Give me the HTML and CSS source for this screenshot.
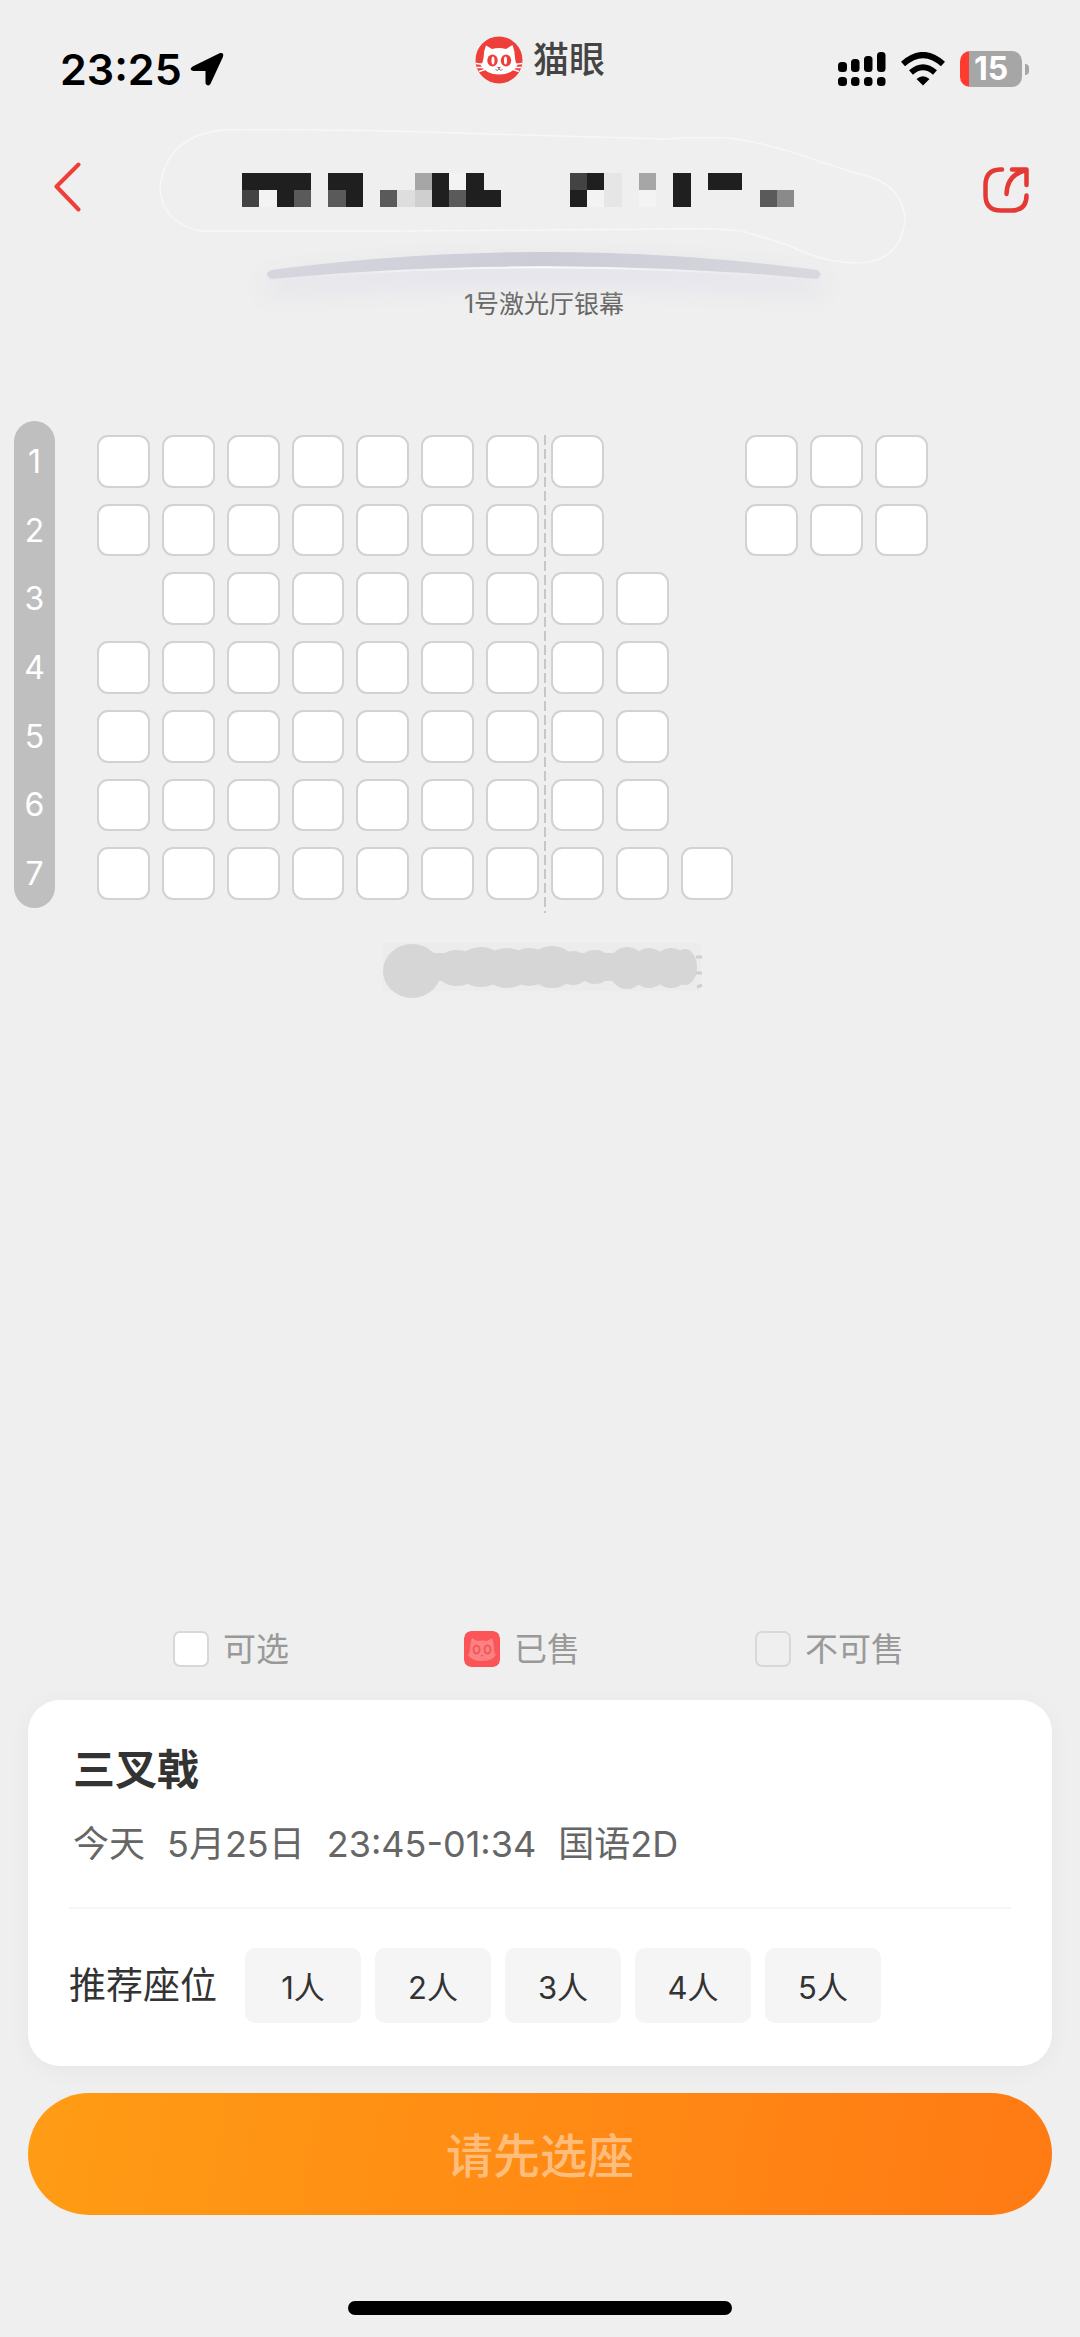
FILE: index.html
```html
<!DOCTYPE html>
<html lang="zh-CN">
<head>
<meta charset="utf-8">
<meta name="viewport" content="width=device-width, initial-scale=1">
<title>选座</title>
<link rel="stylesheet" href="styles.css">
</head>
<body>
<div class="status">
  <div class="status-left">
    <span class="time">23:25</span>
    <svg class="locate" width="34" height="34" viewBox="0 0 34 34" aria-hidden="true"><path d="M3 15.500 30.500 2Q33 1.500 32 4.500L19.500 31.500Q17.500 33.500 16.500 31V18H3.500Q0 17.500 3 15.500Z" fill="#000" stroke="#000" stroke-width="2" stroke-linejoin="round"/></svg>
  </div>
  <div class="brand">
    <svg width="48" height="48" viewBox="0 0 48 48" aria-hidden="true">
      <circle cx="24" cy="24" r="23.500" fill="#ef3f3a"/>
      <path d="M11 9.500 17 13Q24 11 31 13L37.500 9Q40 15 40 22Q40 26 42.500 29Q37 38.500 24 38.500Q11 38.500 5.500 29Q8.500 26 8.500 22Q8.500 15 11 9.500Z" fill="#fff"/>
      <path d="M1 27.500 8.500 28.500M2 31.500 9 31.500M4 35.500 10 33.500M47 27.500 39.500 28.500M46 31.500 39 31.500M44 35.500 38 33.500" stroke="#fff" stroke-width="1.400"/>
      <g fill="#ef3f3a"><ellipse cx="17.500" cy="24.500" rx="5.200" ry="6"/><ellipse cx="31" cy="24.500" rx="5.200" ry="6"/><path d="M22 31h4l-2 2.200z"/></g>
      <g fill="#fff"><ellipse cx="18" cy="24.500" rx="1.500" ry="4"/><ellipse cx="30.500" cy="24.500" rx="1.500" ry="4"/></g>
      <path d="M20.500 33.500Q22.500 35.500 24 33Q25.500 35.500 27.500 33.500" fill="none" stroke="#777" stroke-width="1"/>
    </svg>
    <span>猫眼</span>
  </div>
  <div class="status-right">
    <svg width="48" height="34" viewBox="0 0 48 34" aria-hidden="true"><rect x="0" y="10" width="9" height="10" rx="3.500"/><rect x="13" y="7" width="8.500" height="13" rx="3.500"/><rect x="26" y="4" width="8.500" height="16" rx="3.500"/><rect x="39" y="0" width="8.500" height="20" rx="3.500"/><rect x="0" y="25" width="9" height="9" rx="3.500"/><rect x="13" y="25" width="8.500" height="9" rx="3.500"/><rect x="26" y="25" width="8.500" height="9" rx="3.500"/><rect x="39" y="25" width="8.500" height="9" rx="3.500"/></svg>
    <svg width="44" height="34" viewBox="0 0 44 34" aria-hidden="true"><path d="M2 12Q22-6 42 12" fill="none" stroke="#000" stroke-width="6"/><path d="M10 20.500Q22 10 34 20.500" fill="none" stroke="#000" stroke-width="6"/><path d="M15.500 27Q22 21.500 28.500 27L22 33.500Z"/></svg>
    <div class="battery"><span>15</span></div>
  </div>
</div>

<header class="nav">
  <button class="icon-btn" type="button" aria-label="返回"><svg width="27" height="50" viewBox="0 0 27 50"><path d="M24.500 2.500 2.500 24.500 24.500 47.500" fill="none" stroke="#ef3f38" stroke-width="4" stroke-linecap="round" stroke-linejoin="round"/></svg></button>
  <svg class="masked" width="552" height="34" viewBox="0 0 552 34" aria-hidden="true">
    <path d="M-18-43Q100-44 214-40L423-34Q450-36 485-35Q520-32 582-10L617 1Q660 10 663 45Q660 88 617 90Q580 90 546 72L500 58Q470 55 434 56L153 58H-41Q-80 50-82 15Q-76-38-18-43Z" fill="none" stroke="#f7f7f7" stroke-width="1.500"/>
    <g transform="scale(17.250 17)" shape-rendering="crispEdges">
      <path fill="#1f1f1f" d="M0 0h4v1H3v1H2V1H0zM5 0h2v2H6V1H5zM11 0h1v2h-1zM13 0h1v1h1v1h-2zM20 0h1v1h-1zM19 1h1v1h-1zM25 0h1v2h-1zM27 0h2v1h-2z"/>
      <path fill="#434343" d="M0 1h1v1H0zM19 0h1v1h-1z"/>
      <path fill="#5a5a5a" d="M3 1h1v1H3zM5 1h1v1H5zM8 1h1v1H8zM12 1h1v1h-1zM30 1h1v1h-1z"/>
      <path fill="#a6a6a6" d="M10 0h1v1h-1zM23 0h1v1h-1z"/>
      <path fill="#8a8a8a" d="M31 1h1v1h-1z"/>
      <path fill="#dedede" d="M9 1h1v1H9z"/>
      <path fill="#cfcfcf" d="M10 1h1v1h-1z"/>
      <path fill="#e6e6e6" d="M21 0h1v2h-1z"/>
      <path fill="#f3f3f3" d="M1 1h1v1H1zM20 1h1v1h-1zM23 1h1v1h-1zM12 0h1v1h-1z"/>
    </g>
  </svg>
  <button class="icon-btn share" type="button" aria-label="分享"><svg width="46" height="46" viewBox="0 0 46 46"><path d="M19 2.500H17Q2.500 3 2.500 18V28Q2.500 43.500 18 43.500H28Q43.500 43.500 43.500 28.500M29 2.500H43.500V18M43 3Q24 8 23.500 27" fill="none" stroke="#e53935" stroke-width="4.500" stroke-linecap="round" stroke-linejoin="round"/></svg></button>
</header>

<main class="hall">
  <div class="screen">
    <svg width="556" height="28" viewBox="0 0 556 28" aria-hidden="true">
      <defs>
        <linearGradient id="arc"><stop offset="0" stop-color="#d6d6de"/><stop offset=".5" stop-color="#cbccd6"/><stop offset="1" stop-color="#d8d8de"/></linearGradient>
        <linearGradient id="edge"><stop offset="0" stop-color="#fafafa" stop-opacity="0"/><stop offset=".5" stop-color="#fafafa"/><stop offset="1" stop-color="#fafafa" stop-opacity="0"/></linearGradient>
      </defs>
      <path d="M5 18Q278-18 551 18Q558 22 551 27Q278 2 5 27Q-3 22 5 18Z" fill="url(#arc)"/>
      <path d="M20 26.500Q278 4 536 26.500" fill="none" stroke="url(#edge)" stroke-width="2"/>
    </svg>
    <h1>1号激光厅银幕</h1>
  </div>

  <div class="map">
    <ol class="rows"><li>1</li><li>2</li><li>3</li><li>4</li><li>5</li><li>6</li><li>7</li></ol>
    <div class="seats">
      <div class="row">
        <input type="checkbox" class="seat" aria-label="1排1座"><input type="checkbox" class="seat" aria-label="1排2座"><input type="checkbox" class="seat" aria-label="1排3座"><input type="checkbox" class="seat" aria-label="1排4座"><input type="checkbox" class="seat" aria-label="1排5座"><input type="checkbox" class="seat" aria-label="1排6座"><input type="checkbox" class="seat" aria-label="1排7座"><input type="checkbox" class="seat" aria-label="1排8座"><input type="checkbox" class="seat after-aisle" aria-label="1排9座"><input type="checkbox" class="seat" aria-label="1排10座"><input type="checkbox" class="seat" aria-label="1排11座">
      </div>
      <div class="row">
        <input type="checkbox" class="seat" aria-label="2排1座"><input type="checkbox" class="seat" aria-label="2排2座"><input type="checkbox" class="seat" aria-label="2排3座"><input type="checkbox" class="seat" aria-label="2排4座"><input type="checkbox" class="seat" aria-label="2排5座"><input type="checkbox" class="seat" aria-label="2排6座"><input type="checkbox" class="seat" aria-label="2排7座"><input type="checkbox" class="seat" aria-label="2排8座"><input type="checkbox" class="seat after-aisle" aria-label="2排9座"><input type="checkbox" class="seat" aria-label="2排10座"><input type="checkbox" class="seat" aria-label="2排11座">
      </div>
      <div class="row">
        <input type="checkbox" class="seat second-column" aria-label="3排1座"><input type="checkbox" class="seat" aria-label="3排2座"><input type="checkbox" class="seat" aria-label="3排3座"><input type="checkbox" class="seat" aria-label="3排4座"><input type="checkbox" class="seat" aria-label="3排5座"><input type="checkbox" class="seat" aria-label="3排6座"><input type="checkbox" class="seat" aria-label="3排7座"><input type="checkbox" class="seat" aria-label="3排8座">
      </div>
      <div class="row">
        <input type="checkbox" class="seat" aria-label="4排1座"><input type="checkbox" class="seat" aria-label="4排2座"><input type="checkbox" class="seat" aria-label="4排3座"><input type="checkbox" class="seat" aria-label="4排4座"><input type="checkbox" class="seat" aria-label="4排5座"><input type="checkbox" class="seat" aria-label="4排6座"><input type="checkbox" class="seat" aria-label="4排7座"><input type="checkbox" class="seat" aria-label="4排8座"><input type="checkbox" class="seat" aria-label="4排9座">
      </div>
      <div class="row">
        <input type="checkbox" class="seat" aria-label="5排1座"><input type="checkbox" class="seat" aria-label="5排2座"><input type="checkbox" class="seat" aria-label="5排3座"><input type="checkbox" class="seat" aria-label="5排4座"><input type="checkbox" class="seat" aria-label="5排5座"><input type="checkbox" class="seat" aria-label="5排6座"><input type="checkbox" class="seat" aria-label="5排7座"><input type="checkbox" class="seat" aria-label="5排8座"><input type="checkbox" class="seat" aria-label="5排9座">
      </div>
      <div class="row">
        <input type="checkbox" class="seat" aria-label="6排1座"><input type="checkbox" class="seat" aria-label="6排2座"><input type="checkbox" class="seat" aria-label="6排3座"><input type="checkbox" class="seat" aria-label="6排4座"><input type="checkbox" class="seat" aria-label="6排5座"><input type="checkbox" class="seat" aria-label="6排6座"><input type="checkbox" class="seat" aria-label="6排7座"><input type="checkbox" class="seat" aria-label="6排8座"><input type="checkbox" class="seat" aria-label="6排9座">
      </div>
      <div class="row">
        <input type="checkbox" class="seat" aria-label="7排1座"><input type="checkbox" class="seat" aria-label="7排2座"><input type="checkbox" class="seat" aria-label="7排3座"><input type="checkbox" class="seat" aria-label="7排4座"><input type="checkbox" class="seat" aria-label="7排5座"><input type="checkbox" class="seat" aria-label="7排6座"><input type="checkbox" class="seat" aria-label="7排7座"><input type="checkbox" class="seat" aria-label="7排8座"><input type="checkbox" class="seat" aria-label="7排9座"><input type="checkbox" class="seat" aria-label="7排10座">
      </div>
    </div>
  </div>

  <svg class="smudge" width="320" height="56" viewBox="0 0 320 56" aria-hidden="true">
    <rect x="0" y="0" width="318" height="48" fill="#ececec"/>
    <g fill="#d6d6d6"><ellipse cx="29" cy="28" rx="29" ry="27"/><ellipse cx="74" cy="25" rx="22" ry="18"/><ellipse cx="98" cy="24" rx="24" ry="20"/><ellipse cx="124" cy="25" rx="24" ry="20"/><ellipse cx="146" cy="24" rx="22" ry="19"/><ellipse cx="169" cy="24" rx="24" ry="21"/><ellipse cx="190" cy="25" rx="17" ry="17"/><ellipse cx="212" cy="24" rx="18" ry="17"/><ellipse cx="244" cy="25" rx="19" ry="21"/><ellipse cx="266" cy="25" rx="18" ry="20"/><ellipse cx="288" cy="25" rx="19" ry="20"/><ellipse cx="302" cy="24" rx="12" ry="18"/><rect x="30" y="10" width="270" height="28"/></g>
    <path d="M313 14h6M313 30h6M314 44l5-2" stroke="#cfcfcf" stroke-width="3"/>
  </svg>
</main>

<footer class="panel">
  <ul class="legend">
    <li><span class="swatch free"></span>可选</li>
    <li><svg class="swatch" viewBox="0 0 36 36" aria-hidden="true"><rect width="36" height="36" rx="7" fill="#fb5558"/><path d="M8 7 13 10Q18 9 23 10L28 7Q30 12 30 18Q30 22 32 24Q28 30 18 30Q8 30 4 24Q6 22 6 18Q6 12 8 7Z" fill="#fb8282"/><g fill="none" stroke="#f4565a" stroke-width="2"><ellipse cx="12.500" cy="18.500" rx="3" ry="4"/><ellipse cx="23.500" cy="18.500" rx="3" ry="4"/></g><path d="M16.500 24h3l-1.500 2z" fill="#f4565a"/></svg>已售</li>
    <li><span class="swatch"></span>不可售</li>
  </ul>

  <section class="card">
    <h2>三叉戟</h2>
    <p class="show"><span>今天</span><span>5月25日</span><span>23:45-01:34</span><span>国语2D</span></p>
    <div class="suggest">
      <span class="suggest-label">推荐座位</span>
      <div class="chips">
        <button type="button">1人</button><button type="button">2人</button><button type="button">3人</button><button type="button">4人</button><button type="button">5人</button>
      </div>
    </div>
  </section>

  <button class="submit" type="button">请先选座</button>
  <div class="home-bar"></div>
</footer>
</body>
</html>
```

FILE: styles.css
```css
* { box-sizing: border-box; }

body {
  margin: 0;
  min-height: 100vh;
  display: flex;
  flex-direction: column;
  background: #efefef;
  color: #333;
  font-family: Inter, "Noto Sans CJK SC", sans-serif;
}

h1, h2, p, ul, ol { margin: 0; padding: 0; font-weight: 400; }
ul, ol { list-style: none; }
svg { display: block; flex: none; }
button { border: 0; padding: 0; font: inherit; color: inherit; background: none; }

/* Status bar */
.status {
  display: grid;
  grid-template-columns: 1fr auto 1fr;
  align-items: center;
  height: 104px;
  padding: 34px 51px 0;
}
.status-left, .status-right, .brand { display: flex; align-items: center; }
.status-left { gap: 8px; padding-left: 9px; }
.time { color: #000; font-size: 43px; line-height: 52px; font-weight: 600; }
.brand {
  align-self: start;
  gap: 10px;
  padding-top: 2px;
  color: #444;
  font-size: 36px;
  line-height: 48px;
  font-weight: 500;
}
.status-right { justify-content: flex-end; gap: 15px; }
.battery {
  position: relative;
  width: 62px;
  height: 36px;
  margin-right: 7px;
  border-radius: 10px;
  background: linear-gradient(90deg, #ff3b30 9px, #a6a6a6 9px);
  color: #fff;
  font-size: 32px;
  line-height: 36px;
  font-weight: 700;
  text-align: center;
}
.battery::after {
  content: "";
  position: absolute;
  right: -7px;
  top: 13px;
  width: 4px;
  height: 11px;
  border-radius: 0 4px 4px 0;
  background: #a6a6a6;
}

/* Navigation */
.nav {
  display: flex;
  align-items: center;
  justify-content: space-between;
  height: 108px;
  padding: 58px 51px 0 54px;
}
.masked, .share { margin-top: 6px; }
.masked { margin-right: 28px; overflow: visible; }

/* Screen and seat map */
.screen {
  display: flex;
  flex-direction: column;
  align-items: center;
  gap: 6px;
  padding: 40px 0 0 8px;
}
.screen svg { filter: drop-shadow(0 12px 12px #dcdcea); }
.screen h1 { color: #666; font-size: 25px; line-height: 36px; }

.map {
  display: flex;
  align-items: flex-start;
  gap: 42px;
  padding: 99px 152px 0 14px;
}
.rows {
  display: grid;
  grid-template-rows: repeat(7, 1fr);
  width: 41px;
  height: 487px;
  padding: 7px 0 0;
  border-radius: 21px;
  background: #bfbfbf;
  color: #fff;
  font-size: 32px;
  line-height: 40px;
  text-align: center;
}
.rows li { align-self: center; }
.seats {
  position: relative;
  flex: 1;
  display: grid;
  grid-template-rows: repeat(7, 1fr);
  gap: 16px;
  height: 465px;
  margin-top: 14px;
}
.seats::after {
  content: "";
  position: absolute;
  left: 54%;
  top: 0;
  width: 2px;
  height: 478px;
  margin-left: -2px;
  background: repeating-linear-gradient(#c6c6ce 0 10px, transparent 10px 14px);
}
.row { display: grid; grid-template-columns: repeat(13, 1fr); gap: 12px; }
.seat {
  appearance: none;
  margin: 0;
  border: 2px solid #d2d2d2;
  border-radius: 11px;
  background: #fff;
}
.second-column { grid-column: 2; }
.after-aisle { grid-column: 11; }
.smudge { margin: 35px auto 0 383px; }

/* Bottom panel */
.panel { margin-top: auto; padding: 0 28px 22px; }
.legend {
  display: grid;
  grid-template-columns: repeat(3, 291px);
  padding-left: 145px;
  margin-bottom: 27px;
  color: #999;
  font-size: 33px;
  line-height: 48px;
}
.legend li { display: flex; align-items: center; gap: 14px; white-space: nowrap; }
.swatch { width: 36px; height: 36px; border-radius: 7px; }
span.swatch { border: 2px solid #d8d8d8; }
span.free { background: #fff; }

.card {
  padding: 40px 41px 43px;
  border-radius: 32px;
  background: #fff;
  box-shadow: 0 4px 24px rgba(0, 0, 0, 0.04);
}
.card h2 { padding-left: 4px; font-size: 42px; line-height: 60px; font-weight: 700; }
.show {
  display: flex;
  gap: 22px;
  padding: 20px 4px 39px;
  border-bottom: 2px solid #f6f6f6;
  color: #666;
  font-size: 36px;
  line-height: 48px;
}
.suggest { display: flex; align-items: center; gap: 28px; padding-top: 39px; }
.suggest-label { font-size: 37px; line-height: 48px; }
.chips { display: flex; gap: 14px; }
.chips button {
  width: 116px;
  height: 75px;
  border-radius: 10px;
  background: #f5f5f6;
  font-size: 31px;
}

.submit {
  display: block;
  width: 100%;
  height: 122px;
  margin-top: 27px;
  padding-bottom: 4px;
  border-radius: 61px;
  background: linear-gradient(100deg, #ff9c14, #ff7a14);
  color: #ffbd7c;
  font-size: 47px;
  font-weight: 500;
}
.home-bar {
  width: 384px;
  height: 14px;
  margin: 86px auto 0;
  border-radius: 7px;
  background: #000;
}
```
